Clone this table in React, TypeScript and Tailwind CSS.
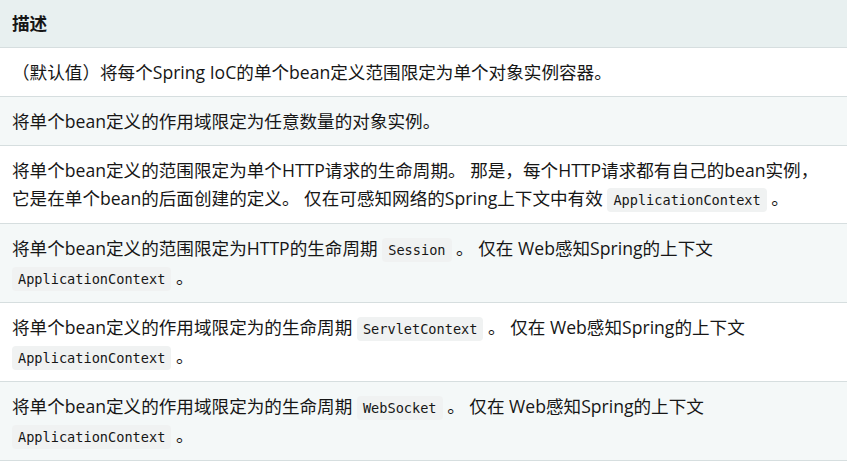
const Code = ({ children }: { children: string }) => (
  <code className="rounded-[4px] bg-[#f0f2f2] px-[6px] py-[4px] font-['DejaVu_Sans_Mono',monospace] text-[13.6px] leading-[26px]">
    {children}
  </code>
);

const items = [
  <>（默认值）将每个Spring IoC的单个bean定义范围限定为单个对象实例容器。</>,
  <>将单个bean定义的作用域限定为任意数量的对象实例。</>,
  <>
    将单个bean定义的范围限定为单个HTTP请求的生命周期。 那是，每个HTTP请求都有自己的bean实例，它是在单个bean的后面创建的定义。 仅在可感知网络的Spring上下文中有效{" "}
    <Code>ApplicationContext</Code> 。
  </>,
  <>
    将单个bean定义的范围限定为HTTP的生命周期 <Code>Session</Code> 。 仅在 Web感知Spring的上下文{" "}
    <Code>ApplicationContext</Code> 。
  </>,
  <>
    将单个bean定义的作用域限定为的生命周期 <Code>ServletContext</Code> 。 仅在 Web感知Spring的上下文{" "}
    <Code>ApplicationContext</Code> 。
  </>,
  <>
    将单个bean定义的作用域限定为的生命周期 <Code>WebSocket</Code> 。 仅在 Web感知Spring的上下文{" "}
    <Code>ApplicationContext</Code> 。
  </>,
];

const App = () => {
  return (
    <div className="bg-white font-['Open_Sans','Noto_Sans_CJK_SC',sans-serif] text-[17.6px] text-[#161616]">
      <table className="w-full border-collapse">
        <thead>
          <tr className="bg-[#e8f0f0]">
            <th className="h-[47px] border-b border-[#d6dedf] px-3 text-left font-bold leading-7">
              描述
            </th>
          </tr>
        </thead>
        <tbody>
          {items.map((item, i) => (
            <tr key={i} className={i % 2 === 0 ? "bg-white" : "bg-[#f4f8f8]"}>
              <td className="border-b border-[#d6dedf] px-3 py-2.5 leading-7">
                {item}
              </td>
            </tr>
          ))}
        </tbody>
      </table>
    </div>
  );
};

export default App;
